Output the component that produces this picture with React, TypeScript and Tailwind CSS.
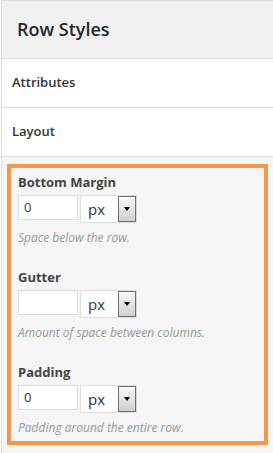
import React from "react";

const font = { fontFamily: '"Open Sans", "Noto Sans", sans-serif' };

function Field({ label, value, help, first }: { label: string; value: string; help: string; first?: boolean }) {
  return (
    <div className={first ? "" : "mt-[22px]"}>
      <div className="text-[13px] leading-[18px] font-bold text-[#444]">{label}</div>
      <div className="mt-[4px] flex items-start">
        <div className="w-[60px] h-[25px] border border-[#ddd] bg-white pl-[5px] flex items-center text-[13px] text-[#32373c]">
          {value}
        </div>
        <div className="relative ml-[2px] w-[57px] h-[28px] border border-[#ddd] bg-white pl-[7px] flex items-center text-[15px] text-[#333]">
          px
          <div className="absolute right-0 top-0 bottom-0 w-[18px] border border-[#6f6f6f] bg-gradient-to-b from-[#fafafa] to-[#cfcfcf] flex items-center justify-center">
            <div className="w-0 h-0 border-l-[3.5px] border-r-[3.5px] border-t-[4px] border-l-transparent border-r-transparent border-t-black" />
          </div>
        </div>
      </div>
      <div className="mt-[7px] text-[12px] leading-[16px] italic text-[#999]">{help}</div>
    </div>
  );
}

export default function App() {
  return (
    <div className="w-[273px] h-[453px] bg-white pl-px" style={font}>
      <div className="h-full border-l border-t border-[#ddd] flex flex-col">
        <div className="h-[58px] bg-[#f1f1f1] border-b border-[#ddd] flex items-center pl-[15px] text-[18px] font-semibold text-[#23282d]">
          Row Styles
        </div>
        <div className="h-[49px] border-b border-[#ddd] flex items-center pl-[10px] text-[13px] font-semibold text-[#333]">
          Attributes
        </div>
        <div className="h-[49px] border-b border-[#ddd] flex items-center pl-[10px] text-[13px] font-semibold text-[#333]">
          Layout
        </div>
        <div className="flex-1 bg-[#f5f5f5] pt-[7px] px-[5px]">
          <div className="h-[281px] border-4 border-[#f79646] pt-[5px] pl-[7px]">
            <Field first label="Bottom Margin" value="0" help="Space below the row." />
            <Field label="Gutter" value="" help="Amount of space between columns." />
            <Field label="Padding" value="0" help="Padding around the entire row." />
          </div>
        </div>
      </div>
    </div>
  );
}
